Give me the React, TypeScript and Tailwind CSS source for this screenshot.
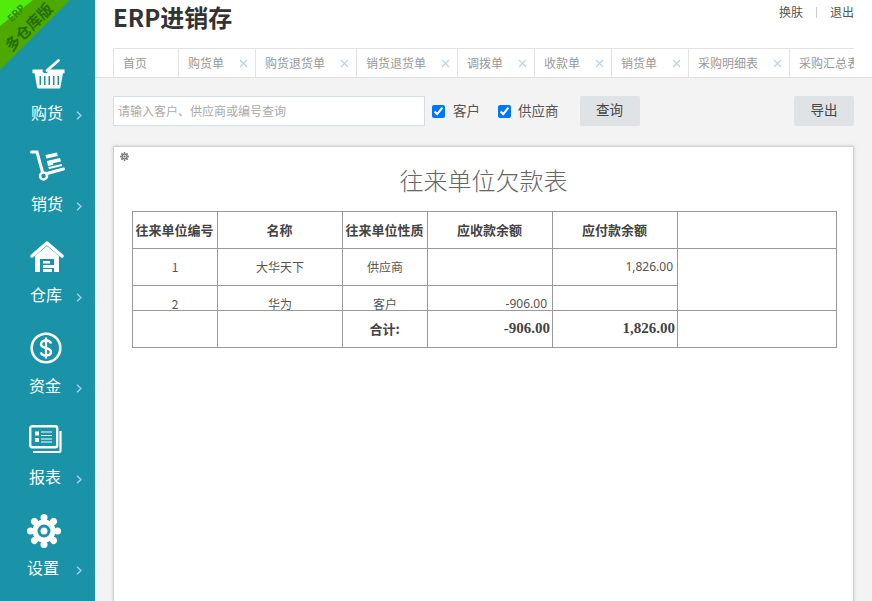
// App.tsx — ERP 往来单位欠款表 page

const CJK = "font-['Noto_Sans_CJK_SC','Liberation_Sans',sans-serif]";

const TABS = [
  { label: "首页", width: "w-[65px]", closable: false },
  { label: "购货单", width: "w-[77px]", closable: true },
  { label: "购货退货单", width: "w-[101px]", closable: true },
  { label: "销货退货单", width: "w-[101px]", closable: true },
  { label: "调拨单", width: "w-[77px]", closable: true },
  { label: "收款单", width: "w-[77px]", closable: true },
  { label: "销货单", width: "w-[77px]", closable: true },
  { label: "采购明细表", width: "w-[101px]", closable: true },
  { label: "采购汇总表", width: "w-[101px]", closable: false },
];

function BasketIcon() {
  return (
    <svg width="34" height="30" viewBox="0 0 34 30" fill="#fff">
      <path d="M15 11.500L26.500 1.500" stroke="#fff" strokeWidth="2.800" strokeLinecap="round" fill="none" />
      <path d="M.5 10.500h10.500l-.5 1.500c0 2 3 3 5 1.500l1.500-3h15.500v3.800H.5z" />
      <path fillRule="evenodd" d="M2.500 14h28.500l-2.500 14a1.500 1.500 0 0 1-1.500 1.500H6.500a1.500 1.500 0 0 1-1.500-1.500z M7.500 17v9h1.500v-9z M12 17v9h1.500v-9z M16.500 17v9h1.500v-9z M21 17v9h1.500v-9z M25.500 17v9h1.500v-9z" />
    </svg>
  );
}

function CartIcon() {
  return (
    <svg width="36" height="32" viewBox="0 0 36 32" fill="#fff">
      <path d="M1.500 2h5.500l5.500 20" stroke="#fff" strokeWidth="3" fill="none" strokeLinecap="round" />
      <path d="M17 23.500L33.500 19" stroke="#fff" strokeWidth="3" strokeLinecap="round" />
      <circle cx="13.500" cy="26" r="3.500" fill="none" stroke="#fff" strokeWidth="2.500" />
      <path d="M15.500 5l11.500-2.500.8 3.500-11.400 2.500z M17 11l13-3 .9 3.500-8 1.800.4 1.400-5.300 1.200z M18.200 17l8-1.800 5.500-1.200.5 2-13 3z" />
    </svg>
  );
}

function HouseIcon() {
  return (
    <svg width="34" height="31" viewBox="0 0 34 31" fill="#fff">
      <path d="M2 15L17 2l15 13" stroke="#fff" strokeWidth="3.500" fill="none" strokeLinecap="round" strokeLinejoin="round" />
      <path fillRule="evenodd" d="M5 15L17 5l12 10v16H5z M10 18v13h3v-3h9v3h2V18z" />
      <path d="M13 20h7v2.500h-7z M13 24h12v3H13z" />
    </svg>
  );
}

function CoinIcon() {
  return (
    <svg width="32" height="32" viewBox="0 0 32 32" fill="none">
      <circle cx="16" cy="16" r="14.300" stroke="#fff" strokeWidth="2.600" />
      <path d="M21 11.500c-.6-2-2.600-3-5-3-3 0-5 1.500-5 3.800 0 5 10 2.600 10 7.500 0 2.300-2 3.700-5 3.700-2.600 0-4.600-1.100-5.200-3.200" stroke="#fff" strokeWidth="2.400" />
      <path d="M16 5.500v21" stroke="#fff" strokeWidth="2.200" />
    </svg>
  );
}

function ReportIcon() {
  return (
    <svg width="33" height="28" viewBox="0 0 33 28" fill="none">
      <rect x="1.200" y="1.200" width="27" height="21" rx="2" stroke="#fff" strokeWidth="2.400" />
      <path d="M31.500 6v19.500a1.500 1.500 0 0 1-1.500 1.500H4" stroke="#fff" strokeWidth="2.200" />
      <rect x="6" y="6.500" width="4" height="4" fill="#fff" />
      <rect x="6" y="13" width="4" height="4" fill="#fff" />
      <path d="M12 7h11M12 10.500h11M12 14h11M12 17h11" stroke="#fff" strokeWidth="1.100" />
    </svg>
  );
}

function GearIcon({ size = 34, color = "#fff", hole = "#1a93a8" }: { size?: number; color?: string; hole?: string }) {
  const teeth = [0, 45, 90, 135, 180, 225, 270, 315];
  return (
    <svg width={size} height={size} viewBox="0 0 34 34">
      {teeth.map((a) => (
        <circle key={a} cx="17" cy="3.500" r="3.500" fill={color} transform={`rotate(${a} 17 17)`} />
      ))}
      <circle cx="17" cy="17" r="11.500" fill={color} />
      <circle cx="17" cy="17" r="5" fill="none" stroke={hole} strokeWidth="3" />
    </svg>
  );
}

const NAV = [
  { label: "购货", icon: <BasketIcon />, iconBox: "ml-[32px] h-[33px]", labelBox: "ml-[31px]", chevron: "ml-[13px]" },
  { label: "销货", icon: <CartIcon />, iconBox: "ml-[30px] h-[33px]", labelBox: "ml-[31px]", chevron: "ml-[13px]" },
  { label: "仓库", icon: <HouseIcon />, iconBox: "ml-[30px] h-[33px]", labelBox: "ml-[30px]", chevron: "ml-[14px]" },
  { label: "资金", icon: <CoinIcon />, iconBox: "ml-[30px] h-[33px]", labelBox: "ml-[29px]", chevron: "ml-[15px]" },
  { label: "报表", icon: <ReportIcon />, iconBox: "ml-[29px] h-[33px] pt-[2px]", labelBox: "ml-[29px]", chevron: "ml-[15px]" },
  { label: "设置", icon: <GearIcon />, iconBox: "ml-[27px] h-[33px]", labelBox: "ml-[27px]", chevron: "ml-[17px]" },
];

const ROWS = [
  { no: "1", name: "大华天下", kind: "供应商", recv: "", pay: "1,826.00" },
  { no: "2", name: "华为", kind: "客户", recv: "-906.00", pay: "" },
];

export default function App() {
  const th = "border-r border-[#999] flex shrink-0 items-center justify-center pb-[1px] pr-[1px] text-[13px] font-bold text-[#444]";
  const td = "border-r border-b border-[#999] flex shrink-0 items-center text-[12px] text-[#555] h-[37px]";
  return (
    <div className={`flex h-screen w-full overflow-hidden bg-[#f3f3f3] ${CJK}`}>
      {/* Sidebar */}
      <aside className="relative w-[95px] shrink-0 bg-[#1a93a8] pt-[59px]">
        <svg className="absolute left-0 top-0" width="70" height="70" viewBox="0 0 70 70">
          <path d="M0 0h70L0 70z" fill="#4da800" />
          <path d="M0 0h33L0 26z" fill="#52ec0c" />
        </svg>
        <span className="absolute left-[6px] top-[8px] -rotate-45 text-[10px] font-bold leading-none text-[#2f8a10]">ERP</span>
        <span className="absolute left-[-2px] top-[19px] w-[60px] -rotate-45 text-center text-[15px] font-bold leading-none whitespace-nowrap text-[#256f0c]">多仓库版</span>
        {NAV.map((item) => (
          <div key={item.label} className="flex h-[91px] flex-col">
            <div className={item.iconBox}>{item.icon}</div>
            <div className={`${item.labelBox} mt-[8px] flex h-[24px] items-center`}>
              <span className="text-[16px] leading-none text-white">{item.label}</span>
              <svg className={`${item.chevron} mt-[6px]`} width="6" height="9" viewBox="0 0 6 9" fill="none">
                <path d="M1 .8L5 4.500 1 8.200" stroke="#a9cfe8" strokeWidth="1.400" />
              </svg>
            </div>
          </div>
        ))}
      </aside>

      <main className="flex min-w-0 flex-1 flex-col">
        {/* Header */}
        <header className="h-[78px] shrink-0 border-b border-[#e0e0e0] bg-white pl-[18px] pr-[18px]">
          <div className="flex h-[48px] items-start justify-between">
            <h1 className="mt-[1px] text-[24px] font-bold leading-[32px] text-[#333]">ERP进销存</h1>
            <div className="mt-[3px] flex items-center text-[12px] leading-[18px] text-[#555]">
              <span>换肤</span>
              <span className="mx-[13px] h-[11px] w-px bg-[#ccc]" />
              <span>退出</span>
            </div>
          </div>
          <div className="flex h-[29px] overflow-hidden border-t border-[#e3e3e3]">
            {TABS.map((tab) => (
              <div key={tab.label} className={`${tab.width} flex shrink-0 items-center justify-between border-l border-[#e3e3e3] pl-[9px] pr-[6px] text-[12px] text-[#999]`}>
                <span className="whitespace-nowrap">{tab.label}</span>
                {tab.closable && (
                  <svg width="9" height="9" viewBox="0 0 9 9" fill="none" className="mr-[1px]">
                    <path d="M1 1l7 7M8 1L1 8" stroke="#bcd3ea" strokeWidth="1.300" />
                  </svg>
                )}
              </div>
            ))}
          </div>
        </header>

        {/* Filters */}
        <div className="flex h-[68px] shrink-0 items-start pl-[18px] pr-[18px] pt-[18px]">
          <input
            type="text"
            placeholder="请输入客户、供应商或编号查询"
            readOnly
            className="h-[30px] w-[312px] border border-[#d6dde4] bg-white pb-[2px] pl-[4px] pr-[5px] text-[12px] placeholder:text-[#aaa] outline-none"
          />
          <label className="ml-[7px] flex h-[30px] items-center text-[13.500px] text-[#555]">
            <input type="checkbox" defaultChecked className="m-0 h-[13px] w-[13px]" />
            <span className="ml-[8px] pb-[2px]">客户</span>
          </label>
          <label className="ml-[18px] flex h-[30px] items-center text-[13.500px] text-[#555]">
            <input type="checkbox" defaultChecked className="m-0 h-[13px] w-[13px]" />
            <span className="ml-[7px] pb-[2px]">供应商</span>
          </label>
          <button className="ml-[21px] h-[30px] w-[60px] rounded-[2px] bg-[#dfe3e6] pb-[3px] text-[13.500px] text-[#444]">查询</button>
          <button className="ml-auto h-[30px] w-[60px] rounded-[2px] bg-[#dfe3e6] pb-[3px] text-[13.500px] text-[#444]">导出</button>
        </div>

        {/* Report card, runs past the bottom of the window */}
        <div className="ml-[18px] mr-[18px] h-[500px] shrink-0 border border-[#d0d0d0] bg-white shadow-[0_0_3px_rgba(0,0,0,0.18)]">
          <div className="h-[20px] pl-[6px] pt-[5px]">
            <GearIcon size={9} color="#777" hole="#fff" />
          </div>
          <h2 className="h-[44px] text-center text-[24px] font-light leading-[26px] text-[#666]">往来单位欠款表</h2>

          <div className="ml-[18px] w-[705px] border border-[#999]">
            {/* Table head */}
            <div className="flex h-[37px] border-b border-[#999]">
              <div className={`${th} w-[85px]`}>往来单位编号</div>
              <div className={`${th} w-[125px]`}>名称</div>
              <div className={`${th} w-[85px]`}>往来单位性质</div>
              <div className={`${th} w-[125px]`}>应收款余额</div>
              <div className={`${th} w-[125px]`}>应付款余额</div>
              <div className="flex-1" />
            </div>

            <div className="flex h-[62px] border-b border-[#999]">
              <div className="w-[545px] overflow-hidden border-r border-[#999]">
                {ROWS.map((row) => (
                  <div key={row.no} className="flex">
                    <div className={`${td} w-[85px] justify-center`}>{row.no}</div>
                    <div className={`${td} w-[125px] justify-center`}>{row.name}</div>
                    <div className={`${td} w-[85px] justify-center`}>{row.kind}</div>
                    <div className={`${td} w-[125px] justify-end pr-[5px] font-['Noto_Sans',sans-serif]`}>{row.recv}</div>
                    <div className={`${td} w-[124px] justify-end border-r-0 pr-[4px] font-['Noto_Sans',sans-serif]`}>{row.pay}</div>
                  </div>
                ))}
              </div>
              <div className="flex-1" />
            </div>

            {/* Totals */}
            <div className="flex h-[36px]">
              <div className={`${th} w-[85px]`} />
              <div className={`${th} w-[125px]`} />
              <div className={`${th} w-[85px]`}>合计:</div>
              <div className={`${th} w-[125px] justify-end pr-[2px] font-['Liberation_Serif',serif] text-[15px]`}>-906.00</div>
              <div className={`${th} w-[125px] justify-end pr-[2px] font-['Liberation_Serif',serif] text-[15px]`}>1,826.00</div>
              <div className="flex-1" />
            </div>
          </div>
        </div>
      </main>
    </div>
  );
}
